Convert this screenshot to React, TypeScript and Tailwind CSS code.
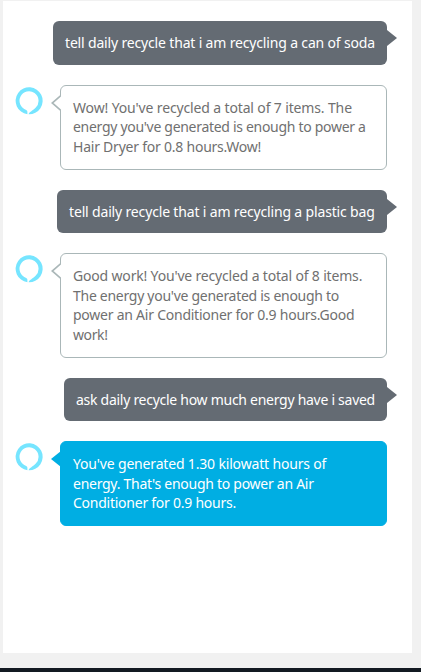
import clsx from "clsx";

type Message = {
  from: "user" | "alexa";
  lines: { text: string; className: string }[];
  active?: boolean;
};

const messages: Message[] = [
  {
    from: "user",
    lines: [{ text: "tell daily recycle that i am recycling a can of soda", className: "w-[310px] tracking-[-0.165px]" }],
  },
  {
    from: "alexa",
    lines: [
      { text: "Wow! You've recycled a total of 7 items. The", className: "tracking-[-0.14px]" },
      { text: "energy you've generated is enough to power a", className: "tracking-[-0.3px]" },
      { text: "Hair Dryer for 0.8 hours.Wow!", className: "tracking-[-0.23px]" },
    ],
  },
  {
    from: "user",
    lines: [{ text: "tell daily recycle that i am recycling a plastic bag", className: "w-[306px] tracking-[-0.16px]" }],
  },
  {
    from: "alexa",
    lines: [
      { text: "Good work! You've recycled a total of 8 items.", className: "tracking-[-0.175px]" },
      { text: "The energy you've generated is enough to", className: "tracking-[-0.28px]" },
      { text: "power an Air Conditioner for 0.9 hours.Good", className: "tracking-[-0.24px]" },
      { text: "work!", className: "tracking-[-0.4px]" },
    ],
  },
  {
    from: "user",
    lines: [{ text: "ask daily recycle how much energy have i saved", className: "w-[299px] tracking-[-0.275px]" }],
  },
  {
    from: "alexa",
    active: true,
    lines: [
      { text: "You've generated 1.30 kilowatt hours of", className: "tracking-[-0.17px]" },
      { text: "energy. That's enough to power an Air", className: "tracking-[-0.27px]" },
      { text: "Conditioner for 0.9 hours.", className: "tracking-[-0.25px]" },
    ],
  },
];

function AlexaRing() {
  return (
    <svg viewBox="0 0 28 28" className="mt-[2px] h-7 w-7 shrink-0 fill-[#76e5ff]">
      <path
        transform="translate(0.6 0.3)"
        d="M11.8 26.9A13.5 13.5 0 1 1 13 27C13.4 24.9 16.8 23.6 20.2 20.2A9.5 9.5 0 1 0 10.6 22.6Q11.8 23 11.8 24.4Z"
      />
    </svg>
  );
}

function Lines({ lines }: { lines: Message["lines"] }) {
  return (
    <>
      {lines.map(({ text, className }) => (
        <span key={text} className={clsx("block whitespace-nowrap", className)}>
          {text}
        </span>
      ))}
    </>
  );
}

function UserMessage({ lines }: Message) {
  return (
    <div className="flex justify-end">
      <div className="relative rounded-[6px] bg-[#646b73] p-3 text-white">
        <Lines lines={lines} />
        <svg viewBox="0 0 10 16" className="absolute top-[9px] -right-[10px] h-4 w-[10px] fill-[#646b73]">
          <path d="M0 0L10 8L0 16Z" />
        </svg>
      </div>
    </div>
  );
}

function AlexaMessage({ lines, active }: Message) {
  return (
    <div className="flex justify-between">
      <AlexaRing />
      <div
        className={clsx(
          "relative w-[327px] rounded-[6px] border p-3",
          active ? "border-[#00aee3] bg-[#00aee3] text-white" : "border-[#aab7b8] bg-white text-[#707070]",
        )}
      >
        <Lines lines={lines} />
        <svg
          viewBox="0 0 10 16"
          className={clsx(
            "absolute top-[9px] -left-[10px] h-4 w-[10px]",
            active ? "fill-[#00aee3] stroke-none" : "fill-white stroke-[#aab7b8]",
          )}
        >
          <path d={active ? "M10 0L0 8L10 16Z" : "M10 0.5L1.2 8L10 15.5"} strokeWidth={1.7} />
        </svg>
      </div>
    </div>
  );
}

export default function App() {
  return (
    <div className="flex h-[672px] w-[421px] flex-col overflow-hidden bg-[#f1f1f1] pt-px font-['Noto_Sans',sans-serif] text-[14px] leading-[19.6px]">
      <main className="ml-[3px] flex h-[652px] w-[409px] flex-col gap-5 bg-white pt-[20.2px] pr-[25px] pl-3">
        {messages.map((message) =>
          message.from === "user" ? (
            <UserMessage key={message.lines[0].text} {...message} />
          ) : (
            <AlexaMessage key={message.lines[0].text} {...message} />
          ),
        )}
      </main>
      <footer className="mt-auto h-1 bg-[#131a22]" />
    </div>
  );
}
